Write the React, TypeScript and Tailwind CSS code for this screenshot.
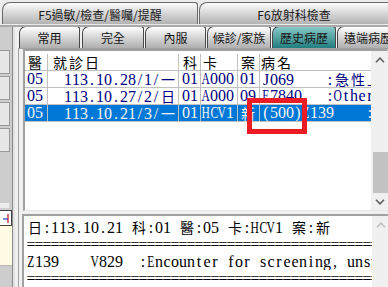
import React from "react";

function Mono({ text }: { text: string }) {
  return (
    <>
      {Array.from(text).map((c, i) => {
        const code = c.codePointAt(0) ?? 0;
        if (code > 0x2e80) {
          return (
            <span
              key={i}
              className="inline-flex w-[16px] shrink-0 justify-center text-[14px] font-['Noto_Sans_CJK_TC',sans-serif]"
            >
              {c}
            </span>
          );
        }
        if (c === " ") {
          return (
            <span key={i} className="inline-block w-[8px] shrink-0">
              {"\u00a0"}
            </span>
          );
        }
        const wide = /[A-HK-Z]|[mw]/.test(c);
        return (
          <span key={i} className="inline-flex w-[8px] shrink-0 justify-center">
            {wide ? <span className="inline-block scale-x-[0.72]">{c}</span> : c}
          </span>
        );
      })}
    </>
  );
}

function Chevron({ up, className }: { up: boolean; className: string }) {
  return (
    <svg width="10" height="6" viewBox="0 0 10 6" className={className} fill="none">
      <path
        d={up ? "M1 5.2 L5 1.2 L9 5.2" : "M1 0.8 L5 4.8 L9 0.8"}
        stroke="currentColor"
        strokeWidth="1.6"
      />
    </svg>
  );
}

const TABS = [
  { label: "常用", w: "w-[61px]", ml: "ml-[0px]" },
  { label: "完全", w: "w-[62px]", ml: "ml-[2px]" },
  { label: "內服", w: "w-[61px]", ml: "ml-[1px]" },
  { label: "候診/家族", w: "w-[64px]", ml: "ml-[1px]" },
  { label: "歷史病歷", w: "w-[64px]", ml: "ml-[1px]", active: true },
  { label: "遠端病歷", w: "w-[62px]", ml: "ml-[1px]" },
];

const ROWS = [
  { doc: "05", date: "113.10.28/1/一", dept: "01", card: "A000", cas: "01", dx: "J069    :急性上呼吸道感染", sel: false },
  { doc: "05", date: "113.10.27/2/日", dept: "01", card: "A000", cas: "09", dx: "E7840   :Other specified", sel: false },
  { doc: "05", date: "113.10.21/3/一", dept: "01", card: "HCV1", cas: "新", dx: "(500)Z139    :Encounter", sel: true },
];

const TAB_FONT = "font-['Noto_Sans_CJK_TC',sans-serif]";

export default function App() {
  return (
    <div className="relative w-[388px] h-[287px] overflow-hidden bg-[#f0f0f0] font-['Liberation_Serif','Noto_Sans_CJK_TC',serif]">
      {/* Top tab row */}
      <div className="flex h-[27px] bg-[#ececec] border-b-2 border-[#a8a8a8]">
        <div
          className={`mt-[2px] ml-[2px] w-[196px] h-[22px] shrink-0 rounded-tl-[8px] rounded-tr-[3px] border border-b-0 border-[#6a6a6a] bg-linear-to-b from-[#fcfcfc] to-[#b2b2b2] flex justify-center pt-[4px] text-[12px] leading-[16px] text-[#1a1a1a] ${TAB_FONT}`}
        >
          F5過敏/檢查/醫囑/提醒
        </div>
        <div
          className={`mt-[2px] ml-[1px] flex-1 h-[22px] rounded-tl-[8px] border border-b-0 border-r-0 border-[#6a6a6a] bg-linear-to-b from-[#fcfcfc] to-[#b2b2b2] flex justify-center pt-[4px] text-[12px] leading-[16px] text-[#1a1a1a] ${TAB_FONT}`}
        >
          F6放射科檢查
        </div>
      </div>

      <div className="flex h-[260px]">
        {/* Left strip */}
        <div className="w-[12px] shrink-0 bg-[#cdcdcd] flex flex-col">
          <div className="mt-[23px] flex flex-col gap-[2px]">
            <div className="h-[24px] w-[10px] border border-l-0 border-[#9a9a9a] bg-[#e6e6e6]" />
            <div className="h-[24px] w-[10px] border border-l-0 border-[#9a9a9a] bg-[#e6e6e6]" />
            <div className="h-[24px] w-[10px] border border-l-0 border-[#9a9a9a] bg-[#e6e6e6]" />
            <div className="h-[24px] w-[10px] border border-l-0 border-[#9a9a9a] bg-[#e6e6e6]" />
          </div>
          <div className="mt-[51px] h-[5px] w-[9px] bg-[#ececec]" />
          <div className="mt-[2px] h-[16px] w-[12px] border border-l-0 border-[#404040] bg-white flex items-center justify-end pr-[1px]">
            <svg width="8" height="11" viewBox="0 0 8 11" fill="none">
              <path d="M6 1 V10" stroke="#d02020" strokeWidth="1.3" />
              <path d="M1 6 H6" stroke="#2040c0" strokeWidth="1.2" />
            </svg>
          </div>
          <div className="h-[40px] w-[12px] bg-[#fffbe3] border-b border-[#b8b8b8]" />
        </div>
        <div className="w-[1px] shrink-0 bg-[#8a8a8a]" />
        <div className="w-[2px] shrink-0 bg-[#e2e2e2]" />

        {/* Main */}
        <div className="flex-1 flex flex-col min-w-0">
          {/* Inner tabs */}
          <div className="h-[24px] flex items-end pl-[4px] overflow-hidden">
            {TABS.map((t) => (
              <div
                key={t.label}
                className={`${t.w} ${t.ml} h-[22px] shrink-0 rounded-tl-[7px] rounded-tr-[3px] border border-b-0 border-[#4a4a4a] flex justify-center pt-[3px] text-[12px] leading-[16px] text-[#151515] ${TAB_FONT} ${
                  t.active
                    ? "bg-linear-to-b from-[#86c9c9] to-[#1e7e7e]"
                    : "bg-linear-to-b from-[#ffffff] to-[#afafaf]"
                }`}
              >
                {t.label}
              </div>
            ))}
          </div>

          {/* Content panel */}
          <div className="flex-1 ml-[3px] border-l border-t border-[#a0a0a0] flex flex-col">
            {/* Grid */}
            <div className="ml-[4px] h-[162px] border-l-2 border-t-2 border-r border-b border-l-[#a0a0a0] border-t-[#a0a0a0] border-r-[#e6e6e6] border-b-[#e6e6e6] bg-white flex">
              <div className="w-[346px] shrink-0 pt-[3px] text-[16px] leading-[16px]">
                {/* header */}
                <div className="flex h-[17px] border-b border-[#c0c0c0] text-black">
                  <div className="w-[23px] shrink-0 border-r border-[#c0c0c0] pl-[2px] whitespace-nowrap overflow-hidden">
                    <Mono text="醫" />
                  </div>
                  <div className="w-[131px] shrink-0 border-r border-[#c0c0c0] pl-[4px] whitespace-nowrap overflow-hidden">
                    <Mono text="就診日" />
                  </div>
                  <div className="w-[22px] shrink-0 border-r border-[#c0c0c0] pl-[3px] whitespace-nowrap overflow-hidden">
                    <Mono text="科" />
                  </div>
                  <div className="w-[37px] shrink-0 border-r border-[#c0c0c0] pl-[1px] whitespace-nowrap overflow-hidden">
                    <Mono text="卡" />
                  </div>
                  <div className="w-[22px] shrink-0 border-r border-[#c0c0c0] pl-[2px] whitespace-nowrap overflow-hidden">
                    <Mono text="案" />
                  </div>
                  <div className="w-[111px] shrink-0 pl-[0px] whitespace-nowrap overflow-hidden">
                    <Mono text="病名" />
                  </div>
                </div>
                {ROWS.map((r, i) => (
                  <div
                    key={i}
                    className={`flex h-[17px] border-b border-[#c0c0c0] ${
                      r.sel ? "bg-[#0078d7] text-[#f4f4f4]" : "text-[#000080]"
                    }`}
                  >
                    <div className="w-[23px] shrink-0 border-r border-[#c0c0c0] pl-[2px] whitespace-nowrap overflow-hidden">
                      <Mono text={r.doc} />
                    </div>
                    <div className="w-[131px] shrink-0 border-r border-[#c0c0c0] pr-[2px] text-right whitespace-nowrap overflow-hidden">
                      <Mono text={r.date} />
                    </div>
                    <div className="w-[22px] shrink-0 border-r border-[#c0c0c0] pl-[3px] whitespace-nowrap overflow-hidden">
                      <Mono text={r.dept} />
                    </div>
                    <div className="w-[37px] shrink-0 border-r border-[#c0c0c0] pl-[1px] whitespace-nowrap overflow-hidden">
                      <Mono text={r.card} />
                    </div>
                    <div className="w-[22px] shrink-0 border-r border-[#c0c0c0] pl-[2px] whitespace-nowrap overflow-hidden">
                      <Mono text={r.cas} />
                    </div>
                    <div className="w-[111px] shrink-0 pl-[2px] whitespace-nowrap overflow-hidden">
                      <Mono text={r.dx} />
                    </div>
                  </div>
                ))}
              </div>
              {/* scrollbar */}
              <div className="w-[18px] shrink-0 bg-[#f0f0f0] flex flex-col">
                <div className="h-[17px] flex items-center justify-center">
                  <Chevron up className="text-[#606060]" />
                </div>
                <div className="flex-1 flex flex-col justify-end items-center">
                  <div className="w-[15px] h-[41px] bg-[#c2c2c2]" />
                </div>
                <div className="h-[17px] flex items-center justify-center">
                  <Chevron up={false} className="text-[#606060]" />
                </div>
              </div>
            </div>

            {/* Bottom text panel */}
            <div className="mt-[3px] ml-[3px] flex-1 border-l-2 border-t-2 border-[#a0a0a0] bg-white flex min-h-0">
              <div className="w-[348px] shrink-0 pl-[3px] pt-[3px] text-[16px] leading-[17px] text-black overflow-hidden">
                <div className="h-[17px] whitespace-nowrap">
                  <Mono text="日:113.10.21 科:01 醫:05 卡:HCV1 案:新" />
                </div>
                <div className="h-[17px] whitespace-nowrap overflow-hidden">
                  <Mono text="============================================" />
                </div>
                <div className="h-[17px] whitespace-nowrap overflow-hidden">
                  <Mono text="Z139    V829  :Encounter for screening, unspecified" />
                </div>
                <div className="h-[17px] whitespace-nowrap overflow-hidden">
                  <Mono text="============================================" />
                </div>
              </div>
              <div className="w-[18px] shrink-0 bg-[#f0f0f0] flex flex-col">
                <div className="h-[17px] flex items-center justify-center">
                  <Chevron up className="text-[#c0c0c0]" />
                </div>
              </div>
            </div>
          </div>
        </div>
      </div>

      {/* Red annotation box */}
      <div className="absolute left-[247px] top-[98px] w-[60px] h-[36px] border-[5px] border-[#ec1c24]" />
    </div>
  );
}
